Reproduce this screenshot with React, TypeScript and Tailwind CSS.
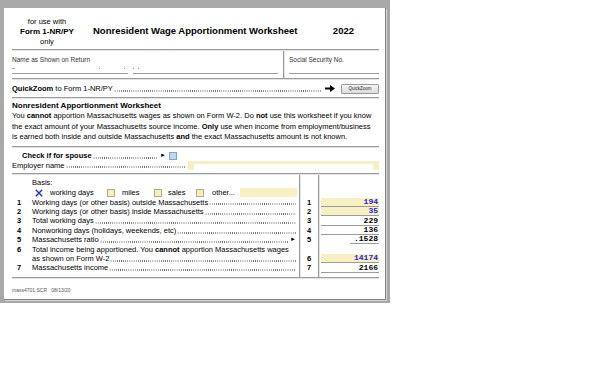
import React from 'react';

function Rule() {
  return <div className="h-[2px] border-t border-[#9b9b9b] border-b border-b-[#e4e4e4]" />;
}

function Leader({ children, className = '' }: { children: React.ReactNode; className?: string }) {
  return (
    <div className={`flex min-w-0 items-stretch ${className}`}>
      <span className="flex shrink-0 items-center whitespace-nowrap">{children}</span>
      <span className="ml-[1px] min-w-0 flex-1 bg-[radial-gradient(circle,#6a6a6a_0.5px,transparent_0.8px)] bg-[length:2.1px_2px] bg-[position:0_5.8px] bg-repeat-x" />
    </div>
  );
}

function Check({ blue = false }: { blue?: boolean }) {
  return (
    <span
      className={`block h-[8px] w-[8px] shrink-0 border ${
        blue ? 'border-[#7aa4d4] bg-[#bcd6f3]' : 'border-[#b3ab86] bg-[#f4eec3]'
      }`}
    />
  );
}

interface Row {
  n: string;
  label: React.ReactNode;
  val?: string;
  input?: boolean;
  arrow?: boolean;
  dots?: boolean;
  num?: string;
  box?: string;
}

const rows: Row[] = [
  { n: '1', num: '1', label: 'Working days (or other basis) outside Massachusetts', val: '194', input: true, dots: true },
  { n: '2', num: '2', label: 'Working days (or other basis) inside Massachusetts', val: '35', input: true, dots: true },
  { n: '3', num: '3', label: 'Total working days', val: '229', dots: true },
  { n: '4', num: '4', label: 'Nonworking days (holidays, weekends, etc)', val: '136', dots: true },
  { n: '5', num: '5', label: 'Massachusetts ratio', val: '.1528', dots: true, arrow: true, box: 'ml-auto w-[29px]' },
  {
    n: '6',
    label: (
      <>
        Total income being apportioned. You <b>cannot</b> apportion Massachusetts wages
      </>
    ),
  },
  { n: '', num: '6', label: 'as shown on Form W-2', val: '14174', input: true, dots: true },
  { n: '7', num: '7', label: 'Massachusetts income', val: '2166', dots: true },
];

function GridRow({ left, num, children, h }: { left: React.ReactNode; num?: string; children?: React.ReactNode; h: string }) {
  return (
    <div className={`flex ${h}`}>
      <div className="flex w-[287px] items-center pr-[3px]">{left}</div>
      <div className="flex w-[19px] items-center justify-center border-l border-[#9b9b9b] font-bold shadow-[inset_1px_0_0_#e4e4e4]">
        {num}
      </div>
      <div className="flex flex-1 items-end border-l border-[#9b9b9b] pl-[2px] shadow-[inset_1px_0_0_#e4e4e4]">
        {children}
      </div>
    </div>
  );
}

export default function App() {
  return (
    <div className="min-h-screen bg-white font-['Liberation_Sans',Arial,sans-serif] text-[7.5px] text-black">
      <div className="h-[303px] w-[390px] bg-[#a8a8a8] pb-[3px] pl-[4px] pr-[4px] pt-[8px]">
        <div className="h-full border-b border-r border-[#808080] bg-white pl-[8px] pr-[6px] shadow-[1px_1px_0_#d6d6d6]">
          {/* header */}
          <div className="flex h-[41px] pt-[9px]">
            <div className="w-[70px] text-center leading-[10px]">
              <div>for use with</div>
              <div className="text-[8px] font-bold">Form 1-NR/PY</div>
              <div>only</div>
            </div>
            <div className="ml-[11px] mt-[9px] whitespace-nowrap text-[9.5px] font-bold leading-[10px]">
              Nonresident Wage Apportionment Worksheet
            </div>
            <div className="ml-auto mr-[25px] mt-[9px] text-[9.5px] font-bold leading-[10px]">2022</div>
          </div>
          <Rule />

          {/* name */}
          <div className="flex h-[27px] text-[6.5px] text-[#333]">
            <div className="w-[271px] pr-[5px]">
              <div className="pt-[5px] leading-[8px]">Name as Shown on Return</div>
              <div className="flex h-[8px] items-center text-[#aaa]">
                <span className="h-px w-[3px] bg-[#aaa]" />
                <span className="ml-[84px] h-px w-px bg-[#aaa]" />
                <span className="ml-[24px] h-px w-px bg-[#aaa]" />
                <span className="ml-[8px] h-px w-px bg-[#aaa]" />
                <span className="ml-[4px] h-px w-px bg-[#aaa]" />
              </div>
              <div className="mt-[1px] flex gap-[5px]">
                <div className="h-px w-[116px] bg-[#9b9b9b]" />
                <div className="h-px flex-1 bg-[#9b9b9b]" />
              </div>
            </div>
            <div className="flex-1 border-l border-[#9b9b9b] pl-[5px] shadow-[inset_1px_0_0_#e4e4e4]">
              <div className="pt-[5px] leading-[8px]">Social Security No.</div>
              <div className="mt-[9px] h-px bg-[#9b9b9b]" />
            </div>
          </div>
          <Rule />

          {/* quickzoom */}
          <div className="flex h-[17px] items-center">
            <Leader className="h-[9px] flex-1">
              <b>QuickZoom</b>&nbsp;to Form 1-NR/PY
            </Leader>
            <svg className="ml-[4px] shrink-0" width="10" height="7" viewBox="0 0 10 7">
              <rect x="0" y="2.5" width="6" height="2" fill="#000" />
              <path d="M5 0 L10 3.5 L5 7 Z" fill="#000" />
            </svg>
            <div className="ml-[6px] flex h-[10px] w-[38px] shrink-0 items-center justify-center rounded-[1px] border border-[#9a9a9a] bg-[linear-gradient(#f4f4f4,#dcdcdc)] text-[4.5px] leading-[6px] text-[#222]">
              QuickZoom
            </div>
          </div>
          <Rule />

          {/* description */}
          <div className="h-[47px] pt-[2px]">
            <div className="text-[8px] font-bold leading-[10px]">Nonresident Apportionment Worksheet</div>
            <div className="whitespace-nowrap leading-[10.5px]">
              You <b>cannot</b> apportion Massachusetts wages as shown on Form W-2. Do <b>not</b> use this worksheet if you know
              <br />
              the exact amount of your Massachusetts source income. <b>Only</b> use when income from employment/business
              <br />
              is earned both inside and outside Massachusetts <b>and</b> the exact Massachusetts amount is not known.
            </div>
          </div>
          <Rule />

          {/* spouse / employer */}
          <div className="h-[25px] pt-[3px] leading-[9px]">
            <div className="flex h-[9px] items-center">
              <Leader className="ml-[10px] h-[9px] w-[135px]">
                <b>Check if for spouse</b>
              </Leader>
              <span className="ml-[3px] text-[6px]">►</span>
              <span className="ml-[3px]">
                <Check blue />
              </span>
            </div>
            <div className="flex h-[10px] items-center">
              <Leader className="h-[9px] w-[174px]">Employer name</Leader>
              <div className="ml-[2px] flex h-[9px] flex-1 items-end bg-[#f6f0c2] px-[6px]">
                <div className="h-[6px] w-full rounded-t-[2px] bg-white" />
              </div>
            </div>
          </div>
          <Rule />

          {/* lines */}
          <GridRow h="h-[13px]" left={<div className="ml-[20px] self-end leading-[10px]">Basis:</div>} />
          <GridRow
            h="h-[9.5px]"
            left={
              <div className="flex items-center">
                <svg className="ml-[23px] shrink-0" width="8" height="8" viewBox="0 0 8 8">
                  <path d="M0.8 0.8 L7.2 7.2 M7.2 0.8 L0.8 7.2" stroke="#1c2fd6" strokeWidth="1.4" />
                </svg>
                <span className="ml-[7px] w-[57px] whitespace-nowrap">working days</span>
                <Check />
                <span className="ml-[7px] w-[32px]">miles</span>
                <Check />
                <span className="ml-[6px] w-[28px]">sales</span>
                <Check />
                <span className="ml-[8px] w-[28px] whitespace-nowrap">other...</span>
                <div className="h-[9px] w-[57px] bg-[#f6f0c2]" />
              </div>
            }
          />
          {rows.map((r, i) => (
            <GridRow
              key={i}
              h="h-[9.4px]"
              num={r.num}
              left={
                <div className="flex h-[9px] w-full items-stretch leading-[9px]">
                  <span className="w-[20px] shrink-0 pl-[5px] font-bold">{r.n}</span>
                  {r.dots ? (
                    <Leader className="flex-1">{r.label}</Leader>
                  ) : (
                    <span className="whitespace-nowrap">{r.label}</span>
                  )}
                  {r.arrow && <span className="ml-[2px] text-[6px]">►</span>}
                </div>
              }
            >
              {r.val && (
                <div
                  className={`flex h-[9px] items-center justify-end border-b border-[#9b9b9b] pr-[1px] font-['Liberation_Mono',monospace] text-[8px] font-bold ${
                    r.box ?? 'w-full'
                  } ${r.input ? 'bg-[#f6f0c2] text-[#1f22d8]' : 'text-black'}`}
                >
                  {r.val}
                </div>
              )}
            </GridRow>
          ))}
          <GridRow h="h-[4px]" left={null} />
          <Rule />

          <div className="pt-[8px] text-[5px] leading-[6px] text-[#555]">mass4701.SCR&nbsp;&nbsp;&nbsp;08/13/20</div>
        </div>
      </div>
    </div>
  );
}
